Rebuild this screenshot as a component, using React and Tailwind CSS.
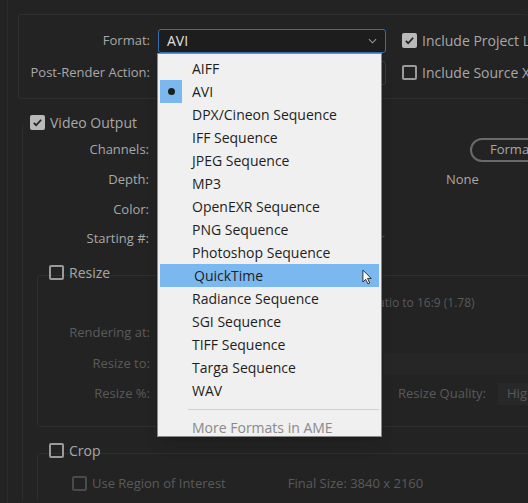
import React from "react";

const items = [
  "AIFF", "AVI", "DPX/Cineon Sequence", "IFF Sequence", "JPEG Sequence", "MP3",
  "OpenEXR Sequence", "PNG Sequence", "Photoshop Sequence", "QuickTime",
  "Radiance Sequence", "SGI Sequence", "TIFF Sequence", "Targa Sequence", "WAV",
];

const Box = ({ checked, dim }) => (
  <span
    className={`w-[15px] h-[15px] rounded-[2px] flex items-center justify-center shrink-0 ${
      checked ? "bg-[#b9b9b9]" : dim ? "border-2 border-[#4a4a4a]" : "border-2 border-[#9a9a9a]"
    }`}
  >
    {checked && (
      <svg viewBox="0 0 12 12" className="w-[11px] h-[11px]">
        <path d="M2 6.5l2.5 2.5L10 3" fill="none" stroke="#232323" strokeWidth="2" />
      </svg>
    )}
  </span>
);

const Label = ({ children, dim }) => (
  <div className={`w-[150px] shrink-0 text-right pr-[1px] whitespace-nowrap ${dim ? "text-[#5a5a5a]" : "text-[#a8a8a8]"}`}>{children}</div>
);

export default function App() {
  return (
    <div
      className="relative w-[528px] h-[503px] overflow-hidden bg-[#232323] text-[13px] text-[#a8a8a8]"
      style={{ fontFamily: "'Open Sans', 'Noto Sans', sans-serif" }}
    >
      <div className="absolute left-[7px] top-0 bottom-0 border-l border-[#2c2c2c]" />
      <div className="ml-[18px] mt-[14px] h-[85px] border border-[#2e2e2e] rounded-[3px] border-r-0 flex flex-col pt-[14px] gap-[9px]">
        <div className="flex items-center h-[23px] -ml-[18px]">
          <Label>Format:</Label>
          <div className="ml-[7px] w-[228px] shrink-0 h-[24px] border border-[#2f6fb3] rounded-[3px] bg-[#1d1d1d] flex items-center justify-between px-[8px] text-[#e0e0e0] text-[14px]">
            AVI
            <svg viewBox="0 0 10 6" className="w-[9px] h-[6px]"><path d="M1 1l4 4 4-4" fill="none" stroke="#999" strokeWidth="1.2" /></svg>
          </div>
          <div className="ml-[16px] flex items-center gap-[5px] text-[14px] whitespace-nowrap"><Box checked />Include Project Link</div>
        </div>
        <div className="flex items-center h-[23px] -ml-[18px]">
          <Label>Post-Render Action:</Label>
          <div className="ml-[7px] w-[228px] shrink-0 h-[24px] border border-[#3a3a3a] rounded-[3px]" />
          <div className="ml-[16px] flex items-center gap-[5px] text-[14px] whitespace-nowrap"><Box />Include Source XMP</div>
        </div>
      </div>

      <div className="ml-[30px] mt-[13px] flex items-center gap-[5px] text-[14px]"><Box checked />Video Output</div>
      <div className="ml-[22px] border-l border-[#2e2e2e] -mt-[8px] pt-[10px]">
        <div className="flex items-center h-[30px] -ml-[23px]"><Label>Channels:</Label>
          <div className="ml-[320px] shrink-0 h-[24px] px-[18px] border-2 border-[#6a6a6a] rounded-full flex items-center text-[13px] whitespace-nowrap">Format</div>
        </div>
        <div className="flex items-center h-[30px] -ml-[23px]"><Label>Depth:</Label><div className="ml-[296px]">None</div></div>
        <div className="flex items-center h-[29px] -ml-[23px]"><Label>Color:</Label></div>
        <div className="flex items-center h-[30px] -ml-[23px]"><Label>Starting #:</Label><div className="ml-[222px] text-[#555]">er</div></div>

        <div className="ml-[26px] mt-[8px] flex items-center gap-[5px] text-[14px]"><Box />Resize</div>
        <div className="ml-[14px] border-l border-t border-b border-[#2e2e2e] rounded-l-[3px] -mt-[8px] h-[152px] text-[#5a5a5a]">
          <div className="flex items-center h-[42px] pt-[12px] -ml-[37px]"><div className="w-[150px] shrink-0" /><div className="ml-[227px] whitespace-nowrap text-[12px]">atio to 16:9 (1.78)</div></div>
          <div className="flex items-center h-[30px] -ml-[37px]"><Label dim>Rendering at:</Label></div>
          <div className="flex items-center h-[31px] -ml-[37px]"><Label dim>Resize to:</Label><div className="ml-[232px] w-[200px] shrink-0 h-[22px] bg-[#262626]" /></div>
          <div className="flex items-center h-[29px] -ml-[37px]"><Label dim>Resize %:</Label>
            <div className="ml-[247px] whitespace-nowrap">Resize Quality:</div>
            <div className="ml-[12px] h-[22px] px-[9px] bg-[#282828] flex items-center">High</div>
          </div>
        </div>

        <div className="ml-[26px] mt-[13px] flex items-center gap-[5px] text-[14px]"><Box />Crop</div>
        <div className="ml-[14px] border-l border-t border-[#2e2e2e] rounded-tl-[3px] -mt-[8px] h-[48px] pt-[12px] text-[#5a5a5a] flex items-center gap-[5px]">
          <div className="ml-[34px] flex items-center gap-[5px] whitespace-nowrap"><Box dim />Use Region of Interest</div>
          <div className="ml-[57px] whitespace-nowrap">Final Size: 3840 x 2160</div>
        </div>
      </div>

      <div className="absolute left-[157px] top-[53px] w-[225px] h-[384px] bg-[#f0f0f0] border border-[#888] shadow-lg text-[14px] text-[#1e1e1e] pt-[3px]">
        {items.map((it) => (
          <div
            key={it}
            className={`h-[23px] flex items-center pl-[34px] relative ${it === "QuickTime" ? "bg-[#7cb8f0] mx-[2px] pl-[32px]" : ""}`}
          >
            {it === "AVI" && (
              <span className="absolute left-[2px] top-0 w-[22px] h-[23px] bg-[#7cb8f0] flex items-center justify-center">
                <span className="w-[7px] h-[7px] rounded-full bg-[#1e1e1e]" />
              </span>
            )}
            {it}
            {it === "QuickTime" && (
              <svg viewBox="0 0 12 18" className="absolute left-[202px] top-[5px] w-[11px] h-[17px]">
                <path d="M1 1v13l3-3 2.5 5 2-1-2.5-5h4z" fill="#fff" stroke="#222" strokeWidth="1" />
              </svg>
            )}
          </div>
        ))}
        <div className="ml-[30px] mr-[2px] my-[7px] border-t border-[#d0d0d0]" />
        <div className="pl-[34px] text-[#8a8a8a]">More Formats in AME</div>
      </div>
    </div>
  );
}
